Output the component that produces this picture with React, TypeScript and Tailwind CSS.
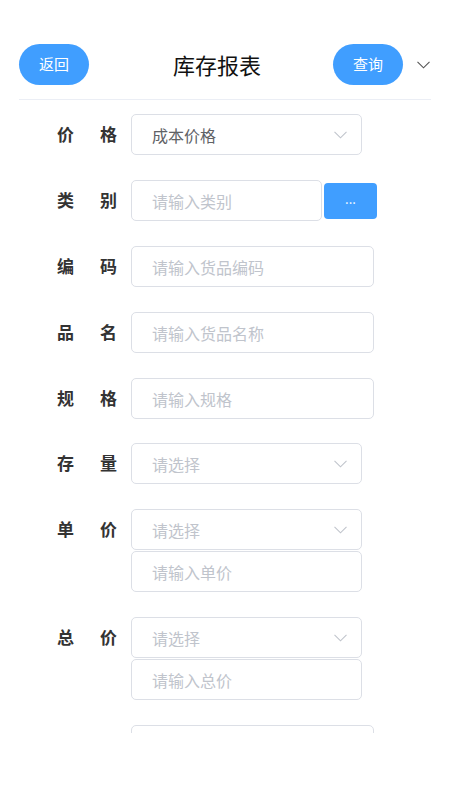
import React from 'react';

const font = { fontFamily: '"Noto Sans CJK SC", "Noto Sans", sans-serif' };

function Chevron({ className = '' }: { className?: string }) {
  return (
    <svg className={className} width="13" height="8" viewBox="0 0 13 8" fill="none">
      <path d="M0.5 0.8 L6.5 6.8 L12.5 0.8" stroke="currentColor" strokeWidth="1.1" />
    </svg>
  );
}

function Label({ a, b }: { a: string; b: string }) {
  return (
    <div className="w-[60px] h-[41px] flex items-center justify-between font-bold text-[17px] text-[#333] shrink-0 pb-[2px]">
      <span>{a}</span>
      <span>{b}</span>
    </div>
  );
}

function Select({ value, placeholder }: { value?: string; placeholder?: string }) {
  return (
    <div className="w-[231px] h-[41px] border border-[#dcdfe6] rounded-[5px] flex items-center justify-between pl-[20px] pr-[14px] bg-white">
      <span className={value ? 'text-[16px] text-[#606266]' : 'text-[16px] text-[#c0c4cc]'}>
        {value ?? placeholder}
      </span>
      <Chevron className="text-[#c0c4cc]" />
    </div>
  );
}

function Input({ placeholder, w = 'w-[243px]' }: { placeholder?: string; w?: string }) {
  return (
    <div className={`${w} h-[41px] border border-[#dcdfe6] rounded-[5px] flex items-center pl-[20px] bg-white`}>
      <span className="text-[16px] text-[#c0c4cc]">{placeholder}</span>
    </div>
  );
}

export default function App() {
  return (
    <div className="w-[450px] h-[800px] bg-white overflow-hidden" style={font}>
      <div className="pt-[44px] px-[19px]">
        <div className="flex items-center h-[41px]">
          <button className="w-[70px] h-[41px] rounded-full bg-[#409eff] text-white text-[15px]">返回</button>
          <div className="flex-1 text-center pl-[12px] text-[22px] text-[#111]">库存报表</div>
          <button className="w-[70px] h-[41px] rounded-full bg-[#409eff] text-white text-[15px]">查询</button>
          <Chevron className="ml-[14px] mr-[1px] text-[#555]" />
        </div>
        <div className="mt-[14px] h-px bg-[#ebeef5]" />
      </div>

      <div className="h-[633px] overflow-hidden pl-[57px] pt-[14px]">
        <div className="flex flex-col gap-[25px]">
          <div className="flex gap-[14px]">
            <Label a="价" b="格" />
            <Select value="成本价格" />
          </div>
          <div className="flex gap-[14px]">
            <Label a="类" b="别" />
            <div className="flex items-center gap-[2px]">
              <Input placeholder="请输入类别" w="w-[191px]" />
              <button className="w-[53px] h-[36px] rounded-[4px] bg-[#409eff] text-white text-[13px] leading-none pb-[4px]">...</button>
            </div>
          </div>
          <div className="flex gap-[14px]">
            <Label a="编" b="码" />
            <Input placeholder="请输入货品编码" />
          </div>
          <div className="flex gap-[14px]">
            <Label a="品" b="名" />
            <Input placeholder="请输入货品名称" />
          </div>
          <div className="flex gap-[14px]">
            <Label a="规" b="格" />
            <Input placeholder="请输入规格" />
          </div>
          <div className="flex gap-[14px] -mt-px">
            <Label a="存" b="量" />
            <Select placeholder="请选择" />
          </div>
          <div className="flex gap-[14px]">
            <Label a="单" b="价" />
            <div className="flex flex-col gap-px">
              <Select placeholder="请选择" />
              <Input placeholder="请输入单价" w="w-[231px]" />
            </div>
          </div>
          <div className="flex gap-[14px]">
            <Label a="总" b="价" />
            <div className="flex flex-col gap-px">
              <Select placeholder="请选择" />
              <Input placeholder="请输入总价" w="w-[231px]" />
            </div>
          </div>
          <div className="flex gap-[14px]">
            <div className="w-[60px] shrink-0" />
            <Input placeholder="" />
          </div>
        </div>
      </div>
    </div>
  );
}
